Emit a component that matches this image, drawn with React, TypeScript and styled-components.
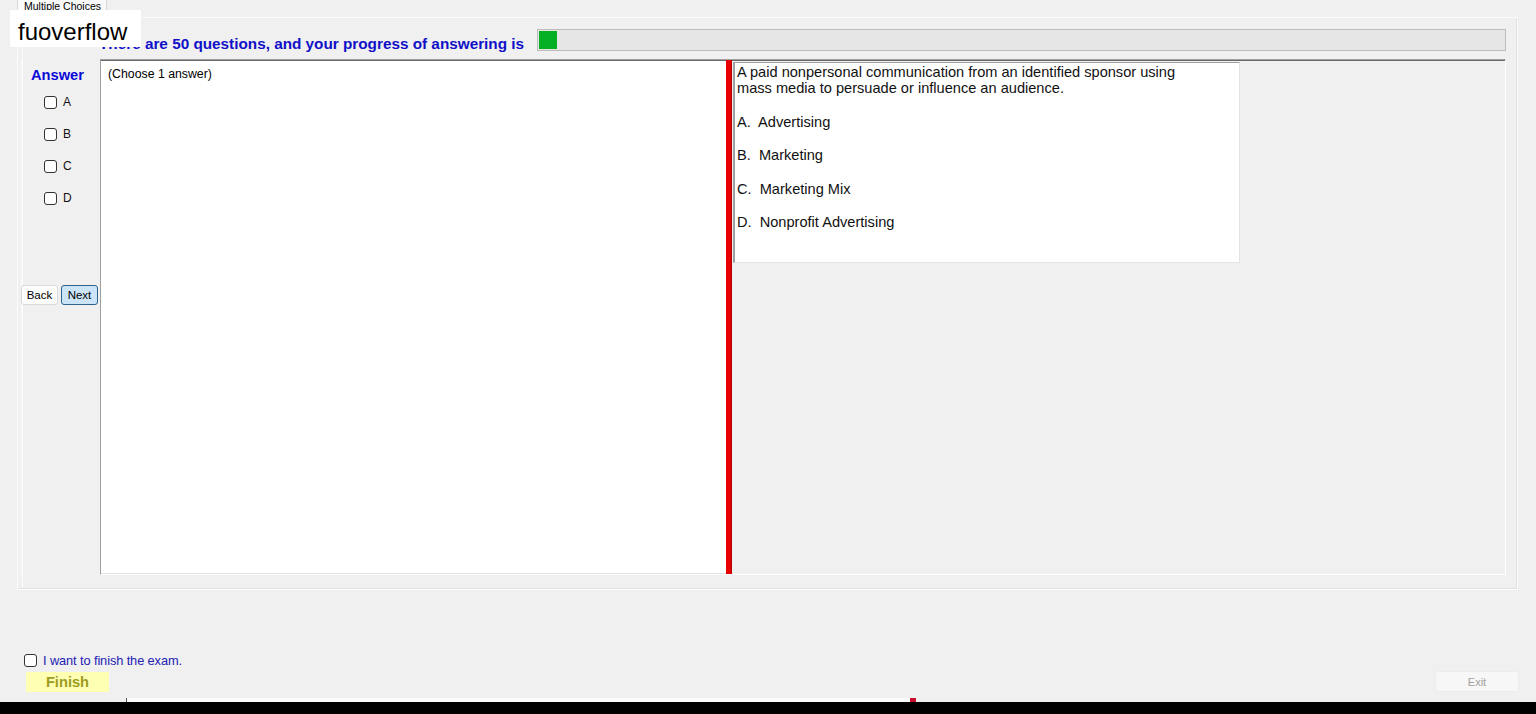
import styled, { createGlobalStyle } from "styled-components";

const GlobalStyle = createGlobalStyle`
  html, body {
    margin: 0;
    padding: 0;
    background: #f0f0f0;
    font-family: "Liberation Sans", Arial, sans-serif;
    color: #000;
  }
  * {
    box-sizing: border-box;
  }
`;

const choices = ["A", "B", "C", "D"];

const options = [
  "A.  Advertising",
  "B.  Marketing",
  "C.  Marketing Mix",
  "D.  Nonprofit Advertising",
];

const answered = 1;
const total = 50;

export default function App() {
  return (
    <>
      <GlobalStyle />
      <Page>
        <Watermark>fuoverflow</Watermark>

        <TabStrip>
          <Tab>Multiple Choices</Tab>
        </TabStrip>

        <TabPanel>
          <HeaderRow>
            <Heading>
              There are {total} questions, and your progress of answering is
            </Heading>
            <Progress>
              <ProgressFill style={{ width: `${(answered / total) * 100}%` }} />
            </Progress>
          </HeaderRow>

          <Body>
            <Sidebar>
              <AnswerTitle>Answer</AnswerTitle>
              <ChoiceList>
                {choices.map((c) => (
                  <ChoiceRow key={c}>
                    <Check type="checkbox" />
                    <ChoiceLabel>{c}</ChoiceLabel>
                  </ChoiceRow>
                ))}
              </ChoiceList>
              <NavButtons>
                <NavButton>Back</NavButton>
                <NavButton active>Next</NavButton>
              </NavButtons>
            </Sidebar>

            <Split>
              <LeftPane>(Choose 1 answer)</LeftPane>
              <Splitter />
              <RightPane>
                <QuestionBox>
                  <QuestionText>
                    A paid nonpersonal communication from an identified sponsor using
                    <br />
                    mass media to persuade or influence an audience.
                  </QuestionText>
                  {options.map((o) => (
                    <Option key={o}>{o}</Option>
                  ))}
                </QuestionBox>
              </RightPane>
            </Split>
          </Body>
        </TabPanel>

        <Footer>
          <FinishCheck>
            <Check type="checkbox" />
            <FinishLabel>I want to finish the exam.</FinishLabel>
          </FinishCheck>
          <ButtonRow>
            <FinishButton>Finish</FinishButton>
            <ExitButton>Exit</ExitButton>
          </ButtonRow>
          <BottomStrip>
            <StripMark />
          </BottomStrip>
        </Footer>

        <Taskbar />
      </Page>
    </>
  );
}

const Page = styled.div`
  position: relative;
  width: 1536px;
  height: 714px;
  display: flex;
  flex-direction: column;
  overflow: hidden;
  background: #f0f0f0;
`;

const Watermark = styled.div`
  position: absolute;
  left: 10px;
  top: 10px;
  width: 131px;
  height: 37px;
  background: #fff;
  padding-left: 8px;
  font-size: 24px;
  line-height: 44px;
  color: #000;
  overflow: hidden;
  z-index: 2;
`;

const TabStrip = styled.div`
  height: 17px;
  padding-left: 17px;
  display: flex;
`;

const Tab = styled.div`
  width: 90px;
  height: 18px;
  background: #fafafa;
  border: 1px solid #d9d9d9;
  border-top: none;
  border-bottom: none;
  font-size: 10.5px;
  line-height: 12px;
  padding-left: 6px;
  margin-top: -1px;
  padding-top: 1px;
  overflow: hidden;
  white-space: nowrap;
  position: relative;
  z-index: 1;
`;

const TabPanel = styled.div`
  margin-left: 17px;
  width: 1501px;
  height: 573px;
  border: 1px solid #fcfcfc;
  border-right-color: #fafafa;
  box-shadow: inset -1px -1px 0 #e2e2e2, inset 4px 0 0 #f0f0f0,
    inset 5px 0 0 #fafafa;
  padding: 11px 11px 0 3px;
  display: flex;
  flex-direction: column;
`;

const HeaderRow = styled.div`
  display: flex;
  height: 22px;
  align-items: flex-start;
`;

const Heading = styled.div`
  width: 438px;
  margin-left: 78px;
  padding-top: 6px;
  font-size: 15.3px;
  font-weight: bold;
  line-height: 17px;
  color: #1010c8;
  white-space: nowrap;
`;

const Progress = styled.div`
  flex: 1;
  height: 22px;
  background: #e6e6e6;
  border: 1px solid #bcbcbc;
  padding: 1px;
`;

const ProgressFill = styled.div`
  height: 100%;
  min-width: 18px;
  max-width: 18px;
  background: #06b025;
`;

const Body = styled.div`
  display: flex;
  margin-top: 8px;
  height: 516px;
`;

const Sidebar = styled.div`
  width: 79px;
  display: flex;
  flex-direction: column;
  box-shadow: inset 1px 0 0 #fafafa;
`;

const AnswerTitle = styled.div`
  margin-top: 7px;
  padding-left: 10px;
  height: 18px;
  line-height: 18px;
  font-size: 14.67px;
  font-weight: bold;
  color: #0a0ad8;
`;

const ChoiceList = styled.div`
  display: flex;
  flex-direction: column;
  padding-left: 23px;
  margin-top: 2px;
`;

const ChoiceRow = styled.label`
  display: flex;
  align-items: center;
  height: 32px;
  gap: 6px;
`;

const Check = styled.input`
  appearance: none;
  margin: 0;
  width: 13px;
  height: 13px;
  border: 1px solid #333;
  border-radius: 3px;
  background: #fff;
  flex-shrink: 0;
`;

const ChoiceLabel = styled.span`
  font-size: 12px;
  color: #111;
`;

const NavButtons = styled.div`
  display: flex;
  gap: 3px;
  margin-top: 71px;
`;

const NavButton = styled.button<{ active?: boolean }>`
  width: 37px;
  height: 20px;
  padding: 0;
  font-family: "Liberation Sans", Arial, sans-serif;
  font-size: 11.5px;
  color: #000;
  border-radius: 3px;
  background: ${(props) => (props.active ? "#cce4f7" : "#fdfdfd")};
  border: 1px solid ${(props) => (props.active ? "#2c628b" : "#dadada")};
`;

const Split = styled.div`
  flex: 1;
  display: flex;
  border-top: 1px solid #a0a0a0;
  border-left: 1px solid #a0a0a0;
  border-right: 1px solid #fff;
  border-bottom: 1px solid #fff;
`;

const LeftPane = styled.div`
  width: 625px;
  background: #fff;
  border-top: 1px solid #696969;
  border-bottom: 1px solid #e3e3e3;
  padding: 6px 7px;
  font-size: 12.3px;
  line-height: 14px;
`;

const Splitter = styled.div`
  width: 6px;
  background: #e60000;
  border-right: 1px solid #b40000;
`;

const RightPane = styled.div`
  flex: 1;
  background: #f0f0f0;
  border-top: 1px solid #696969;
  padding: 1px 0 0 1px;
`;

const QuestionBox = styled.div`
  width: 507px;
  height: 201px;
  background: #fff;
  border-top: 1px solid #a0a0a0;
  border-left: 2px solid #a0a0a0;
  border-right: 1px solid #e3e3e3;
  border-bottom: 1px solid #e3e3e3;
  padding: 1px 2px;
  font-size: 14.6px;
  line-height: 16.3px;
  color: #111;
`;

const QuestionText = styled.div`
  margin-bottom: 17.7px;
`;

const Option = styled.div`
  white-space: pre;
  line-height: 16.5px;
  margin-bottom: 16.7px;
`;

const Footer = styled.div`
  display: flex;
  flex-direction: column;
  padding: 0 17px 0 24px;
`;

const FinishCheck = styled.label`
  display: flex;
  align-items: center;
  gap: 6px;
  margin-top: 63px;
  height: 14px;
`;

const FinishLabel = styled.span`
  font-size: 12.8px;
  color: #2222b4;
  letter-spacing: -0.1px;
`;

const ButtonRow = styled.div`
  display: flex;
  justify-content: space-between;
  align-items: flex-end;
  margin-top: 4px;
  height: 21px;
`;

const FinishButton = styled.button`
  margin-left: 2px;
  width: 83px;
  height: 20px;
  padding: 0;
  border: none;
  background: #ffffb4;
  font-family: "Liberation Sans", Arial, sans-serif;
  font-size: 14.67px;
  font-weight: bold;
  color: #9c9c20;
`;

const ExitButton = styled.button`
  width: 84px;
  height: 21px;
  padding: 0;
  border: 1px solid #ececec;
  border-radius: 3px;
  background: #f7f7f7;
  font-family: "Liberation Sans", Arial, sans-serif;
  font-size: 11px;
  color: #a0a0a0;
`;

const BottomStrip = styled.div`
  margin: 6px 0 0 102px;
  width: 790px;
  height: 4px;
  background: #fbfbfb;
  border-left: 1px solid #555;
  display: flex;
  justify-content: flex-end;
`;

const StripMark = styled.div`
  width: 6px;
  height: 4px;
  background: #c8102e;
`;

const Taskbar = styled.div`
  margin-top: auto;
  height: 12px;
  background: #000;
`;
